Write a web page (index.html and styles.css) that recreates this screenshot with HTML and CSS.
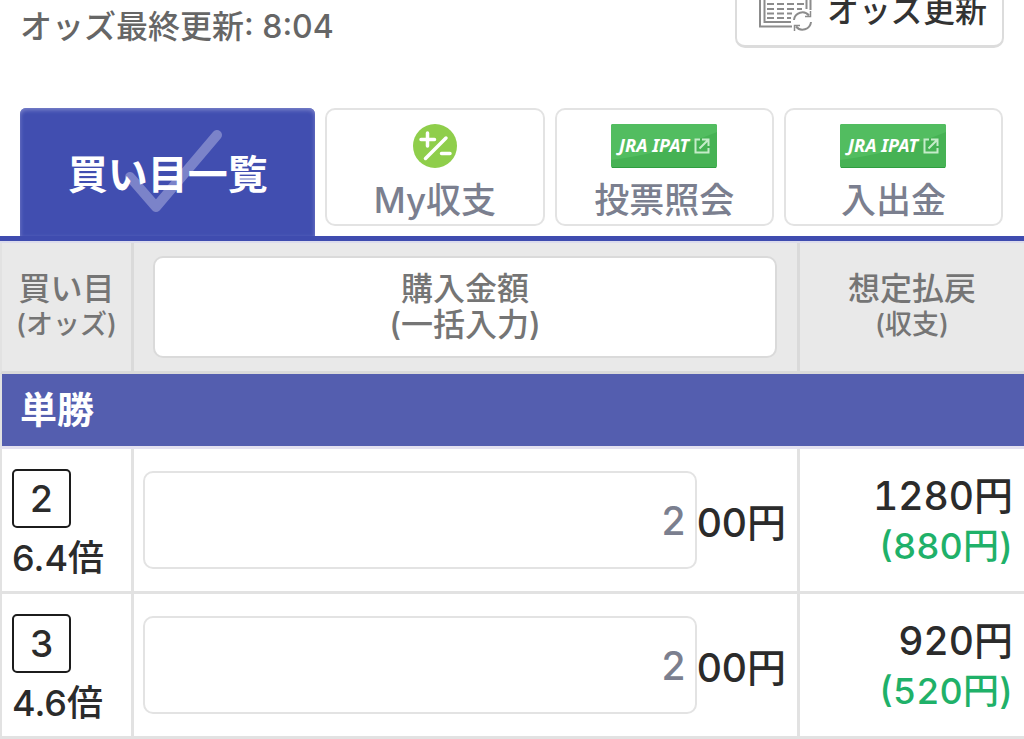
FILE: index.html
```
<!DOCTYPE html>
<html lang="ja">
<head>
    <meta charset="UTF-8">
    <meta name="viewport" content="width=device-width, initial-scale=1.0">
    <title>買い目一覧</title>
    <link rel="stylesheet" href="styles.css">
</head>
<body>
    <header class="odds-header">
        <p class="odds-time">オッズ最終更新: 8:04</p>
        <button type="button" class="reload-button">
            <svg class="reload-icon" width="54" height="46" viewBox="0 -2 54 46" fill="none" stroke="#8c8c8c" stroke-width="2" aria-hidden="true">
                <path d="M1 -2V39.500H33M5.500 -2V35H32M47.500 -2V22M51.500 -2V23"/>
                <path d="M8 7h7M18 7h7M28 7h7M38 7h7M8 12h7M18 12h7M28 12h7M38 12h7M8 17h7M18 17h7M28 17h7M38 17h7M8 22h7M18 22h7M28 22h7M38 22h5M8 26.500h7M18 26.500h7M28 26.500h5M8 31h7M18 31h7M28 31h4"/>
                <path d="M35 33A8.500 8.500 0 0 1 50 28.500M52 35A8.500 8.500 0 0 1 37 39.500"/>
                <path d="M51.500 24v5.500H46M35.500 44v-5.500h5.500" stroke-width="1.500"/>
            </svg>
            オッズ更新
        </button>
    </header>

    <nav class="tabs">
        <a class="tab tab-active" href="#list" aria-current="page">
            <svg class="tab-check" width="100" height="88" viewBox="0 0 100 88" fill="none" aria-hidden="true">
                <path d="M7 49L33 79L94 7" stroke="#7b83c9" stroke-width="10" stroke-linecap="round" stroke-linejoin="round"/>
            </svg>
            <span class="tab-label">買い目一覧</span>
        </a>
        <a class="tab" href="#balance">
            <svg class="tab-icon" width="44" height="44" viewBox="0 0 44 44" fill="none" aria-hidden="true">
                <circle cx="22" cy="22" r="22" fill="#8fce4b"/>
                <path d="M14.500 9v13M8 15.500h13.500M33 14L12.500 34.500M28.500 29.500H37" stroke="#fff" stroke-width="3.500" stroke-linecap="round"/>
            </svg>
            <span>My収支</span>
        </a>
        <a class="tab" href="#inquiry">
            <svg class="tab-icon" width="106" height="44" viewBox="0 0 106 44" aria-hidden="true">
                <rect width="106" height="44" rx="2" fill="#46b254"/>
                <path d="M2 0H104Q106 0 106 2V8Q55 29 0 36V2Q0 0 2 0Z" fill="#52bd60"/>
                <path d="M1 43.500H105" stroke="#2f9e40"/>
                <text class="ipat-text" x="8" y="28">JRA IPAT</text>
                <path d="M89 15.500H84.500V28.500H97.500V24M91 15.500H97.500V22M97 16L88.500 24.500" fill="none" stroke="#c5ecc9" stroke-width="2"/>
            </svg>
            <span>投票照会</span>
        </a>
        <a class="tab" href="#payment">
            <svg class="tab-icon" width="106" height="44" viewBox="0 0 106 44" aria-hidden="true">
                <rect width="106" height="44" rx="2" fill="#46b254"/>
                <path d="M2 0H104Q106 0 106 2V8Q55 29 0 36V2Q0 0 2 0Z" fill="#52bd60"/>
                <path d="M1 43.500H105" stroke="#2f9e40"/>
                <text class="ipat-text" x="8" y="28">JRA IPAT</text>
                <path d="M89 15.500H84.500V28.500H97.500V24M91 15.500H97.500V22M97 16L88.500 24.500" fill="none" stroke="#c5ecc9" stroke-width="2"/>
            </svg>
            <span>入出金</span>
        </a>
    </nav>

    <table class="bet-table">
        <colgroup>
            <col class="col-bet">
            <col>
            <col class="col-payout">
        </colgroup>
        <thead>
            <tr>
                <th scope="col">買い目<small>(オッズ)</small></th>
                <th scope="col" class="bulk-cell">
                    <button type="button" class="bulk-button">購入金額<br>(一括入力)</button>
                </th>
                <th scope="col">想定払戻<small>(収支)</small></th>
            </tr>
        </thead>
        <tbody>
            <tr>
                <th scope="rowgroup" colspan="3" class="bet-type">単勝</th>
            </tr>
            <tr>
                <td class="bet-cell">
                    <span class="horse-number">2</span>
                    <span class="odds">6.4倍</span>
                </td>
                <td class="amount-cell">
                    <div class="amount">
                        <input type="text" id="amount-2" class="amount-input" inputmode="numeric" value="2">
                        <label for="amount-2">00円</label>
                    </div>
                </td>
                <td class="payout-cell">1280円<span class="profit">(880円)</span></td>
            </tr>
            <tr>
                <td class="bet-cell">
                    <span class="horse-number">3</span>
                    <span class="odds">4.6倍</span>
                </td>
                <td class="amount-cell">
                    <div class="amount">
                        <input type="text" id="amount-3" class="amount-input" inputmode="numeric" value="2">
                        <label for="amount-3">00円</label>
                    </div>
                </td>
                <td class="payout-cell">920円<span class="profit">(520円)</span></td>
            </tr>
        </tbody>
    </table>
</body>
</html>
```
FILE: styles.css
```
* {
    box-sizing: border-box;
}

body {
    margin: 0;
    background: #fff;
    color: #2b2b2b;
    font-family: Inter, "Noto Sans CJK JP", sans-serif;
    font-weight: 500;
}

button,
input {
    font: inherit;
}

/* オッズ更新 */
.odds-header {
    display: flex;
    justify-content: space-between;
    align-items: flex-start;
    padding: 0 20px;
    height: 108px;
}

.odds-time {
    margin: 9px 0 0;
    color: #666;
    font-size: 32px;
    line-height: 36px;
}

.reload-button {
    display: flex;
    align-items: center;
    gap: 14px;
    height: 80px;
    margin-top: -32px;
    padding: 0 15px 0 22px;
    border: 2px solid #dcdcdc;
    border-bottom-width: 3px;
    border-radius: 10px;
    background: #fff;
    color: #333;
    font-size: 32px;
    cursor: pointer;
}

/* タブ */
.tabs {
    display: grid;
    grid-template-columns: 295fr 219fr 219fr 219fr;
    gap: 10px;
    align-items: start;
    padding: 0 21px 0 20px;
    border-bottom: 5px solid #3f4caf;
}

.tab {
    display: flex;
    flex-direction: column;
    align-items: center;
    height: 118px;
    padding-top: 14px;
    border: 2px solid #e3e3e3;
    border-radius: 10px;
    background: #fff;
    color: #7b7f8f;
    font-size: 35px;
    line-height: 64px;
    text-decoration: none;
}

.tab-active {
    position: relative;
    justify-content: center;
    height: 128px;
    padding-top: 6px;
    border: 0;
    border-radius: 6px 6px 0 0;
    background: #414eb0;
    box-shadow: inset 0 2px 4px #7d85cb;
    color: #fff;
    font-size: 40px;
    font-weight: 700;
}

.tab-check {
    position: absolute;
    left: 103px;
    top: 20px;
}

.tab-label {
    position: relative;
}

.tab-icon {
    display: block;
    flex: none;
}

.ipat-text {
    fill: #fff;
    font-family: "Noto Sans", sans-serif;
    font-size: 18px;
    font-style: italic;
    font-weight: 700;
}

/* 買い目テーブル */
.bet-table {
    width: 100%;
    border-collapse: separate;
    border-spacing: 0;
    border-top: 2px solid #dcdcec;
    table-layout: fixed;
}

.col-bet {
    width: 134px;
}

.col-payout {
    width: 224px;
}

.bet-table th,
.bet-table td {
    padding: 0;
    border-right: 3px solid #e2e2e2;
    border-bottom: 3px solid #e2e2e2;
}

.bet-table th:first-child,
.bet-table td:first-child {
    border-left: 2px solid #e2e2e2;
}

.bet-table th:last-child,
.bet-table td:last-child {
    border-right: 0;
}

.bet-table thead th {
    border-color: #dadada;
    background: #e9e9e9;
    color: #757575;
    font-size: 32px;
    font-weight: 500;
    line-height: 36px;
}

.bet-table small {
    display: block;
    font-size: 27px;
}

.bet-table .bulk-cell {
    padding: 13px 20px 13px 19px;
}

.bulk-button {
    display: block;
    width: 100%;
    padding: 13px 0;
    border: 2px solid #dadada;
    border-radius: 10px;
    background: #fff;
    color: #757575;
    cursor: pointer;
}

.bet-table .bet-type {
    padding: 2px 18px 0;
    border-bottom-color: #e4e1f0;
    background: #545eaf;
    color: #fff;
    font-size: 37px;
    font-weight: 700;
    line-height: 70px;
    text-align: left;
}

.bet-table .bet-cell {
    padding: 20px 0 11px 10px;
}

.horse-number {
    display: block;
    width: 59px;
    border: 2px solid #1c1c1c;
    border-radius: 5px;
    font-size: 37px;
    line-height: 55px;
    text-align: center;
}

.odds {
    display: block;
    margin-top: 8px;
    font-size: 36px;
    line-height: 44px;
}

.bet-table .amount-cell {
    padding: 0 11px 0 9px;
}

.amount {
    display: flex;
    align-items: center;
    font-size: 39px;
}

.amount-input {
    flex: 1;
    min-width: 0;
    height: 98px;
    padding: 0 9px;
    border: 2px solid #e3e3e3;
    border-radius: 10px;
    background: #fff;
    color: #7b7f8f;
    text-align: right;
}

.bet-table .payout-cell {
    padding: 2px 11px 0 0;
    font-size: 39px;
    line-height: 50px;
    font-variant-numeric: tabular-nums;
    text-align: right;
}

.profit {
    display: block;
    color: #1fb169;
    font-size: 36px;
}
```
